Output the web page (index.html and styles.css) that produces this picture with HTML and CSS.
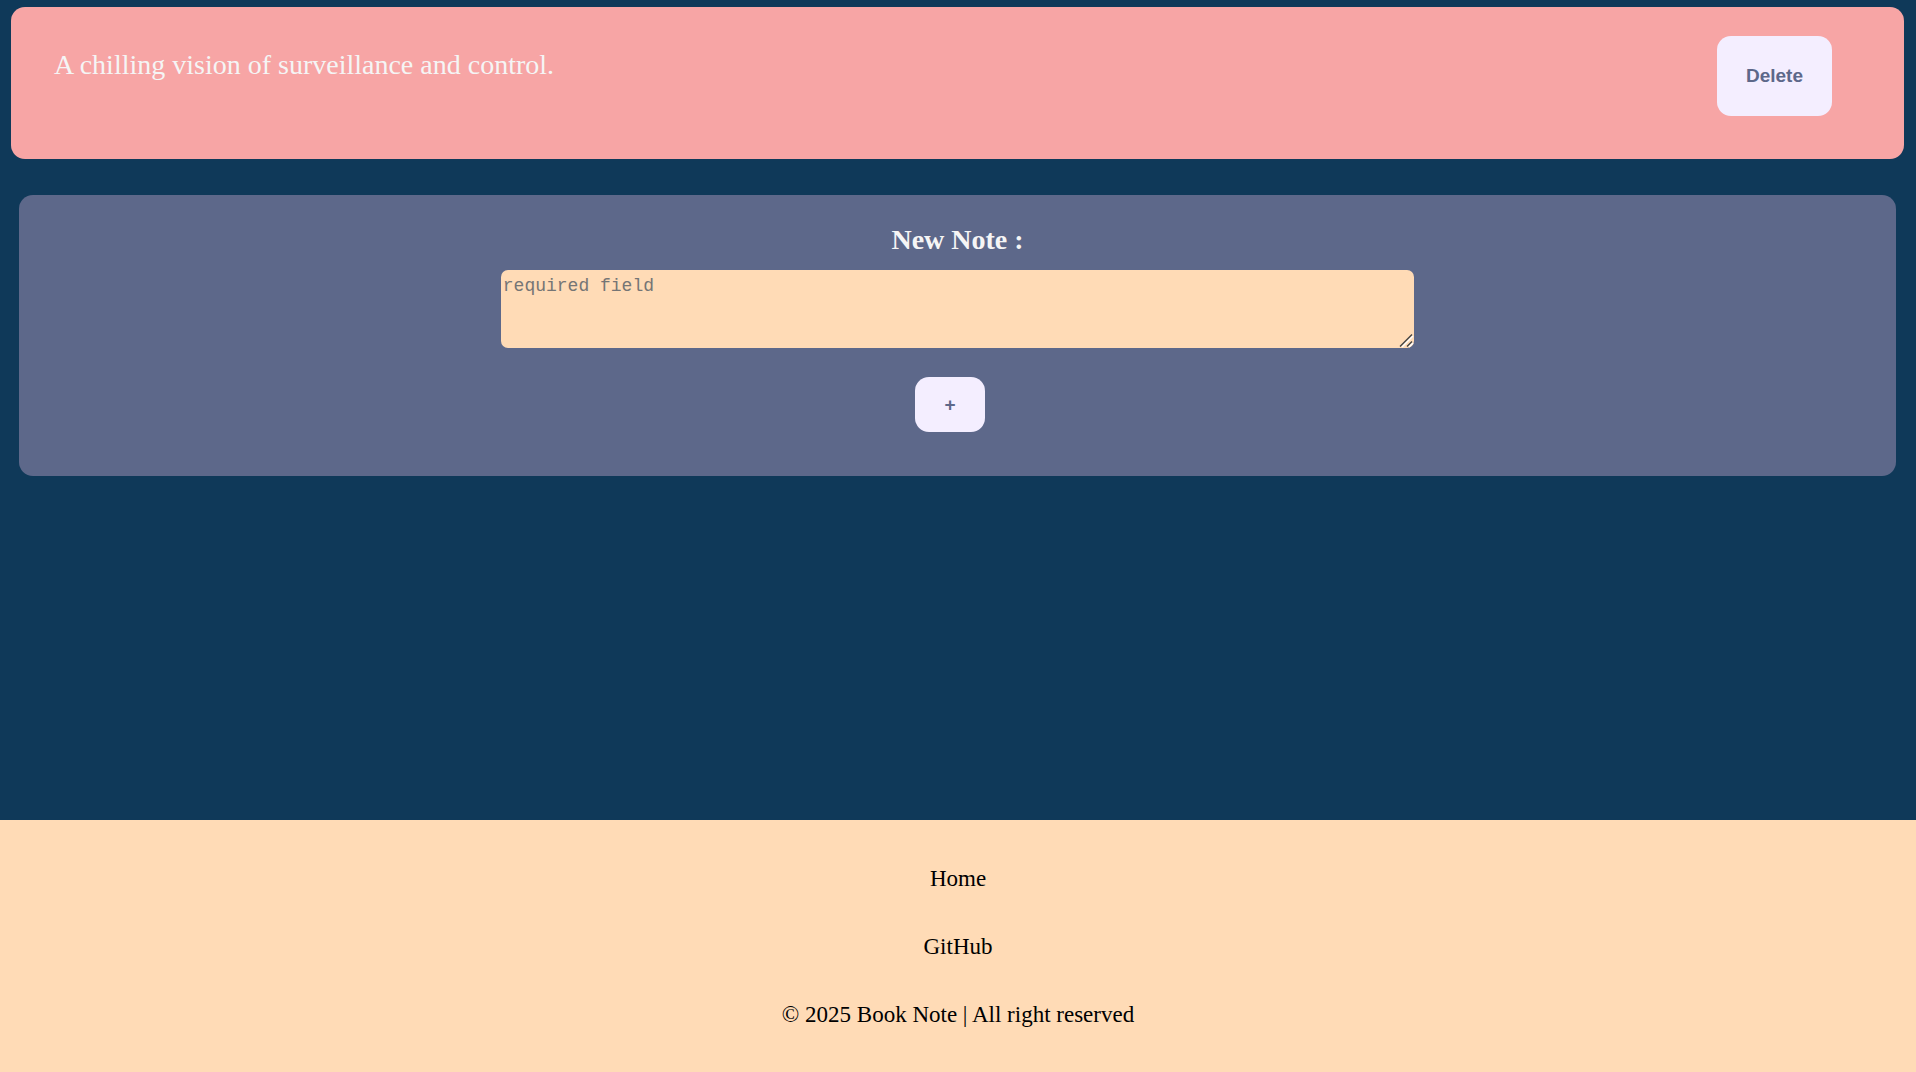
FILE: index.html
```html
<!DOCTYPE html>
<html lang="en">
<head>
  <meta charset="utf-8">
  <meta name="viewport" content="width=device-width, initial-scale=1">
  <title>Book Note</title>
  <link rel="stylesheet" href="styles.css">
</head>
<body>
  <main class="content">
    <article class="note">
      <p class="note-text">A chilling vision of surveillance and control.</p>
      <button class="button button-delete" type="button">Delete</button>
    </article>
    <form class="new-note">
      <label class="new-note-label" for="note">New Note :</label>
      <textarea class="new-note-input" id="note" name="note" placeholder="required field" required></textarea>
      <button class="button button-add" type="submit">+</button>
    </form>
  </main>
  <footer class="footer">
    <a class="footer-link" href="#home">Home</a>
    <a class="footer-link" href="#github">GitHub</a>
    <p class="footer-copy">© 2025 Book Note | All right reserved</p>
  </footer>
</body>
</html>
```

FILE: styles.css
```css
* {
  box-sizing: border-box;
}

body {
  display: flex;
  flex-direction: column;
  min-height: 100vh;
  margin: 0;
  background: #0f3959;
  font-family: "Liberation Serif", "Times New Roman", serif;
}

.content {
  display: flex;
  flex: 1;
  flex-direction: column;
  gap: 36px;
  padding: 7px 12px 36px 11px;
}

.note {
  display: flex;
  align-items: flex-start;
  justify-content: space-between;
  padding: 29px 72px 43px 43px;
  border-radius: 14px;
  background: #f7a5a5;
  color: whitesmoke;
}

.note-text {
  margin: 13px 0 0;
  font-size: 28px;
  line-height: 32px;
}

.button {
  padding: 0 29px;
  border: 0;
  border-radius: 14px;
  background: #f4eeff;
  color: #5d688a;
  font-family: "Liberation Sans", Arial, sans-serif;
  font-size: 19px;
  font-weight: bold;
  line-height: 22px;
  cursor: pointer;
}

.button-delete {
  height: 80px;
}

.button-add {
  height: 55px;
  margin: 29px 15px 0 0;
}

.new-note {
  display: flex;
  flex-direction: column;
  align-items: center;
  margin: 0 8px;
  padding: 29px 43px 44px;
  border-radius: 14px;
  background: #5d688a;
}

.new-note-label {
  color: whitesmoke;
  font-size: 28px;
  font-weight: bold;
  line-height: 32px;
}

.new-note-input {
  width: 51%;
  height: 78px;
  margin-top: 14px;
  padding: 4px 2px;
  border: 0;
  border-radius: 7px;
  background: #ffdbb6;
  font-family: "Liberation Mono", Consolas, monospace;
  font-size: 18px;
  line-height: 24px;
}

.new-note-input::-webkit-resizer {
  background: url("data:image/svg+xml,%3Csvg xmlns='http://www.w3.org/2000/svg' width='15' height='15' fill='none' stroke-width='1.4'%3E%3Cpath d='M3 14L14 3M10 14l4-4' stroke='%23fff'/%3E%3Cpath d='M1 13.500L13 1.500M8 13.500l5-5' stroke='%23444'/%3E%3C/svg%3E") right bottom no-repeat;
}

.footer {
  display: flex;
  flex-direction: column;
  align-items: center;
  gap: 42px;
  padding: 46px 24px 44px;
  background: #ffdbb6;
  color: #000;
  font-size: 23px;
  line-height: 26px;
}

.footer-link {
  color: inherit;
  text-decoration: none;
}

.footer-copy {
  margin: 0;
}
```
